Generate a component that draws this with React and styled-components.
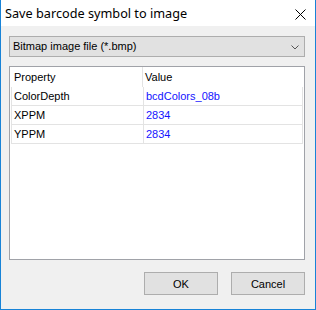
import React from "react";
import styled, { createGlobalStyle } from "styled-components";

const Global = createGlobalStyle`
  html, body { margin: 0; padding: 0; background: #f0f0f0; }
  body { font-family: "Liberation Sans", Arial, sans-serif; font-size: 11px; color: #000; }
`;

const Window = styled.div`
  width: 316px;
  height: 310px;
  box-sizing: border-box;
  border: 1px solid #1883d7;
  border-top: none;
  background: #f0f0f0;
  display: flex;
  flex-direction: column;
`;

const TitleBar = styled.div`
  height: 26px;
  flex: none;
  background: #fff;
  display: flex;
  align-items: center;
  justify-content: space-between;
  padding-left: 4px;
  padding-right: 9px;
`;

const Title = styled.span`
  font-family: "Noto Sans", "Open Sans", sans-serif;
  font-size: 12.7px;
  line-height: 26px;
  color: #000;
`;

const CloseIcon = styled.svg`
  width: 11px;
  height: 11px;
  margin-top: 3px;
`;

const Body = styled.div`
  flex: 1;
  display: flex;
  flex-direction: column;
  padding: 10px 10px 14px 8px;
`;

const Combo = styled.div`
  height: 21px;
  box-sizing: border-box;
  border: 1px solid #adadad;
  background: #e1e1e1;
  display: flex;
  align-items: center;
  justify-content: space-between;
  padding: 0 5px 0 3px;
`;

const ComboText = styled.span`
  line-height: 19px;
`;

const Chevron = styled.svg`
  width: 8px;
  height: 5px;
  margin-top: 1px;
`;

const ListView = styled.div`
  margin-top: 9px;
  height: 194px;
  box-sizing: border-box;
  border: 1px solid #a0a2a8;
  background: #fff;
  padding-left: 1px;
`;

const Row = styled.div`
  display: grid;
  grid-template-columns: 132px 159px;
  height: ${(p) => (p.$header ? "20px" : "19px")};
  box-sizing: border-box;
  ${(p) =>
    p.$header
      ? ""
      : `border-bottom: 1px solid #e3e3e3; border-left: 1px solid #e3e3e3; width: 292px;`}
`;

const Cell = styled.div`
  box-sizing: border-box;
  padding-left: ${(p) => (p.$first ? (p.$header ? "3px" : "2px") : "2px")};
  line-height: ${(p) => (p.$header ? "20px" : "18px")};
  color: ${(p) => (p.$value ? "#1414ff" : "#000")};
  white-space: nowrap;
  ${(p) => (p.$first ? "border-right: 1px solid #e3e3e3;" : "")}
  ${(p) => (!p.$first && !p.$header ? "border-right: 1px solid #e3e3e3;" : "")}
`;

const Buttons = styled.div`
  margin-top: 12px;
  display: flex;
  justify-content: flex-end;
  gap: 13px;
`;

const Button = styled.button`
  width: 74px;
  height: 23px;
  box-sizing: border-box;
  border: 1px solid #adadad;
  background: #e1e1e1;
  font-family: inherit;
  font-size: 11px;
  color: #000;
  padding: 0;
`;

const rows = [
  ["ColorDepth", "bcdColors_08b"],
  ["XPPM", "2834"],
  ["YPPM", "2834"],
];

export default function App() {
  return (
    <>
      <Global />
      <Window>
        <TitleBar>
          <Title>Save barcode symbol to image</Title>
          <CloseIcon viewBox="0 0 11 11">
            <path d="M0.5 0.5 L10.5 10.5 M10.5 0.5 L0.5 10.5" stroke="#000" strokeWidth="1" fill="none" />
          </CloseIcon>
        </TitleBar>
        <Body>
          <Combo>
            <ComboText>Bitmap image file (*.bmp)</ComboText>
            <Chevron viewBox="0 0 8 5">
              <path d="M0.5 0.5 L4 4 L7.5 0.5" stroke="#555" strokeWidth="1" fill="none" />
            </Chevron>
          </Combo>
          <ListView>
            <Row $header>
              <Cell $first $header>Property</Cell>
              <Cell $header>Value</Cell>
            </Row>
            {rows.map(([k, v]) => (
              <Row key={k}>
                <Cell $first>{k}</Cell>
                <Cell $value>{v}</Cell>
              </Row>
            ))}
          </ListView>
          <Buttons>
            <Button>OK</Button>
            <Button>Cancel</Button>
          </Buttons>
        </Body>
      </Window>
    </>
  );
}
